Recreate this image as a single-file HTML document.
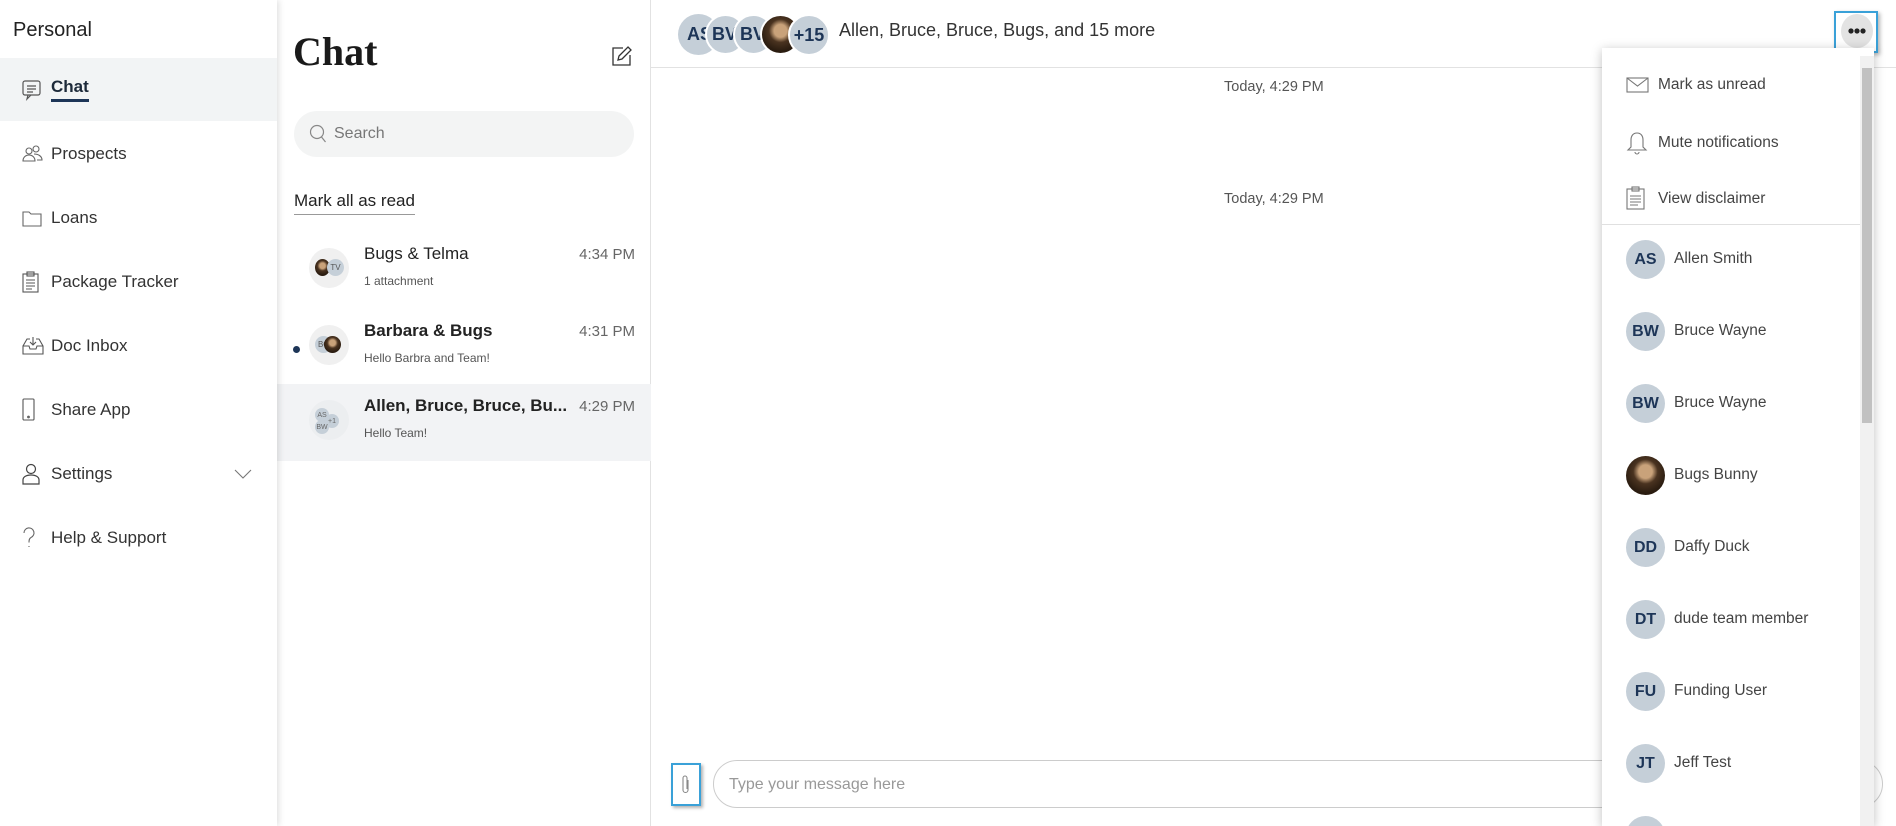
<!DOCTYPE html>
<html style="width:1896px;height:826px;overflow:hidden"><head><meta charset="utf-8"><style>
*{box-sizing:border-box;margin:0;padding:0}
body{width:1896px;height:826px;overflow:hidden;font-family:"Liberation Sans",sans-serif;color:#222;background:#fff;position:relative}
.abs{position:absolute}
#side{left:0;top:0;width:277px;height:826px;background:#fff;box-shadow:2px 0 6px rgba(0,0,0,.12);z-index:2}
.nav{position:absolute;left:0;width:277px;height:64px;display:flex;align-items:center;font-size:17px;color:#333}
.nav svg{position:absolute;left:22px}
.nav span{position:absolute;left:51px}
#list{left:277px;top:0;width:374px;height:826px;background:#fff;border-right:1px solid #e2e2e2}
.row{position:absolute;left:0;width:374px;height:77px}
.av{position:absolute;border-radius:50%;background:#c5cfd8;color:#1d3557;font-weight:bold;display:flex;align-items:center;justify-content:center}
.photo{background:radial-gradient(circle at 50% 40%,#c9a27a 0 22%,#4a3320 40%,#2a1c10 70%)}
.nm{position:absolute;left:87px;top:12px;font-size:17px;color:#222}
.sub{position:absolute;left:87px;top:42px;font-size:12px;color:#555}
.tm{position:absolute;right:16px;top:14px;font-size:15px;color:#666}
#menu{left:1602px;top:48px;width:272px;height:778px;background:#fff;box-shadow:0 2px 10px rgba(0,0,0,.25);z-index:5;overflow:hidden}
.mi{position:absolute;left:0;width:258px;font-size:15.5px;color:#444}
.mi svg{position:absolute;left:24px}
.mi span{position:absolute;left:56px}
.ct{position:absolute;left:0;width:258px;height:60px}
.ct .av{left:24px;top:0;width:39px;height:39px;font-size:16px}
.ct span{position:absolute;left:72px;top:10px;font-size:15.5px;color:#444}
</style></head><body>
<div id="side" class="abs">
  <div class="abs" style="left:13px;top:19px;font-size:20px;color:#222">Personal</div>
  <div class="nav" style="top:58px;height:63px;background:#f2f4f5"><svg width="20" height="22" viewBox="0 0 20 22" fill="none" stroke="#555" stroke-width="1.2"><rect x="1" y="2" width="17" height="14" rx="2"/><path d="M5 7h9M5 10h9M5 13h6M6 16l-1 4 4-4"/></svg><span style="font-weight:bold;color:#1d2a3a;border-bottom:3px solid #1d3557;padding-bottom:2px;top:19px">Chat</span></div>
  <div class="nav" style="top:122px"><svg width="22" height="18" viewBox="0 0 22 18" fill="none" stroke="#666" stroke-width="1.1"><circle cx="7" cy="6" r="3"/><circle cx="14" cy="4" r="3"/><path d="M1 16c0-4 3-6 6-6s6 2 6 6zM12 9c4 0 8 2 8 6h-5"/></svg><span>Prospects</span></div>
  <div class="nav" style="top:186px"><svg width="20" height="18" viewBox="0 0 20 18" fill="none" stroke="#666" stroke-width="1.1"><path d="M1 3h6l2 2h10v12H1z"/></svg><span>Loans</span></div>
  <div class="nav" style="top:250px"><svg width="18" height="22" viewBox="0 0 18 22" fill="none" stroke="#555" stroke-width="1.1"><rect x="1" y="3" width="15" height="18"/><rect x="5" y="1" width="7" height="4"/><path d="M4 9h9M4 12h9M4 15h9M4 18h6"/></svg><span>Package Tracker</span></div>
  <div class="nav" style="top:314px"><svg width="22" height="20" viewBox="0 0 22 20" fill="none" stroke="#555" stroke-width="1.1"><path d="M1 10l4-7h3M14 3h3l4 7v8H1v-8h6l1 3h6l1-3h6M11 1v8M8 6l3 3 3-3"/></svg><span>Doc Inbox</span></div>
  <div class="nav" style="top:378px"><svg width="14" height="24" viewBox="0 0 14 24" fill="none" stroke="#555" stroke-width="1.1"><rect x="1" y="1" width="11" height="21" rx="1"/><circle cx="6.5" cy="19" r="0.8"/></svg><span>Share App</span></div>
  <div class="nav" style="top:442px"><svg width="18" height="22" viewBox="0 0 18 22" fill="none" stroke="#444" stroke-width="1.2"><circle cx="9" cy="6" r="4.5"/><path d="M1 21v-4c0-3 3-5 8-5s8 2 8 5v4z"/></svg><span>Settings</span><svg style="left:234px" width="18" height="10" viewBox="0 0 18 10" fill="none" stroke="#777" stroke-width="1.1"><path d="M1 1l8 8 8-8"/></svg></div>
  <div class="nav" style="top:506px"><svg width="14" height="22" viewBox="0 0 14 22" fill="none" stroke="#666" stroke-width="1.1"><path d="M2 6a5 5 0 1 1 7 4.5c-2 1-2 3-2 5M7 19v1"/></svg><span>Help &amp; Support</span></div>
</div>
<div id="list" class="abs">
  <div class="abs" style="left:16px;top:28px;font-family:'Liberation Serif',serif;font-weight:bold;font-size:40px;color:#1a1a1a">Chat</div>
  <svg class="abs" style="left:335px;top:46px" width="20" height="20" viewBox="0 0 20 20" fill="none" stroke="#333" stroke-width="1.3"><path d="M11 2H1v17h17V9"/><path d="M16 1l3 3-9 9-4 1 1-4z"/></svg>
  <div class="abs" style="left:17px;top:111px;width:340px;height:46px;border-radius:23px;background:#f3f4f4"></div>
  <svg class="abs" style="left:32px;top:124px" width="18" height="20" viewBox="0 0 18 20" fill="none" stroke="#888" stroke-width="1.2"><circle cx="8" cy="8" r="6.5"/><path d="M12.5 13l4 5"/></svg>
  <div class="abs" style="left:57px;top:125px;font-size:16px;color:#777">Search</div>
  <div class="abs" style="left:17px;top:191px;font-size:17px;color:#222;border-bottom:1px solid #999;padding-bottom:3px">Mark all as read</div>
  <div class="row" style="top:232px"><div class="av" style="left:32px;top:16px;width:40px;height:40px;background:#f0f0f0"></div><div class="av photo" style="left:38px;top:27px;width:15px;height:17px"></div><div class="av" style="left:50px;top:27px;width:17px;height:17px;font-size:8px;font-weight:normal;color:#555">TV</div><div class="nm">Bugs &amp; Telma</div><div class="sub">1 attachment</div><div class="tm">4:34 PM</div></div>
  <div class="row" style="top:309px"><div class="abs" style="left:16px;top:37px;width:7px;height:7px;border-radius:50%;background:#1d3557"></div><div class="av" style="left:32px;top:16px;width:40px;height:40px;background:#f0f0f0"></div><div class="av" style="left:38px;top:27px;width:17px;height:17px;font-size:8px;font-weight:normal;color:#555">BC</div><div class="av photo" style="left:47px;top:27px;width:17px;height:17px"></div><div class="nm" style="font-weight:bold">Barbara &amp; Bugs</div><div class="sub">Hello Barbra and Team!</div><div class="tm">4:31 PM</div></div>
  <div class="row" style="top:384px;background:#f2f3f5"><div class="av" style="left:32px;top:16px;width:40px;height:40px;background:#eceef0"></div><div class="av" style="left:38px;top:24px;width:14px;height:14px;font-size:7px;font-weight:normal;color:#666">AS</div><div class="av" style="left:48px;top:30px;width:14px;height:14px;font-size:7px;font-weight:normal;color:#666">+1</div><div class="av" style="left:38px;top:36px;width:14px;height:14px;font-size:7px;font-weight:normal;color:#666">BW</div><div class="nm" style="font-weight:bold">Allen, Bruce, Bruce, Bu...</div><div class="sub">Hello Team!</div><div class="tm">4:29 PM</div></div>
</div>
<div class="abs" style="left:651px;top:0;width:1245px;height:68px;border-bottom:1px solid #e2e2e2;background:#fff"></div>
<div class="av abs" style="left:678px;top:14px;width:41px;height:41px;font-size:18px;justify-content:flex-start;padding-left:9px;overflow:hidden">AS</div>
<div class="av abs" style="left:705px;top:14px;width:41px;height:41px;font-size:18px;border:2px solid #fff;justify-content:flex-start;padding-left:5px;overflow:hidden">BV</div>
<div class="av abs" style="left:733px;top:14px;width:41px;height:41px;font-size:18px;border:2px solid #fff;justify-content:flex-start;padding-left:5px;overflow:hidden">BV</div>
<div class="av abs photo" style="left:760px;top:14px;width:41px;height:41px;border:2px solid #fff"></div>
<div class="av abs" style="left:788px;top:14px;width:42px;height:42px;font-size:18px;border:2px solid #fff">+15</div>
<div class="abs" style="left:839px;top:20px;font-size:18px;color:#333">Allen, Bruce, Bruce, Bugs, and 15 more</div>
<div class="abs" style="left:1224px;top:79px;font-size:14.5px;color:#555">Today, 4:29 PM</div>
<div class="abs" style="left:1224px;top:191px;font-size:14.5px;color:#555">Today, 4:29 PM</div>
<div class="abs" style="left:1834px;top:11px;width:44px;height:42px;border:2px solid #3aa1d8;box-shadow:2px 2px 4px rgba(0,0,0,.3)"></div>
<div class="abs" style="left:1841px;top:14px;width:32px;height:34px;border-radius:50%;background:#e3e3e3"></div>
<div class="abs" style="left:1848px;top:28px;width:18px;height:6px;background:radial-gradient(circle,#222 2.4px,transparent 2.8px) 0 0/6px 6px repeat-x"></div>
<div class="abs" style="left:671px;top:763px;width:30px;height:43px;border:2px solid #3aa1d8;box-shadow:2px 2px 3px rgba(0,0,0,.3)"></div>
<svg class="abs" style="left:681px;top:775px" width="10" height="20" viewBox="0 0 10 20" fill="none" stroke="#888" stroke-width="1.1"><path d="M7 5v10a2.5 2.5 0 0 1-5 0V3a2 2 0 0 1 4 0v11"/></svg>
<div class="abs" style="left:713px;top:760px;width:1170px;height:48px;border:1px solid #ccc;border-radius:24px"></div>
<div class="abs" style="left:729px;top:776px;font-size:16px;color:#999">Type your message here</div>
<div id="menu" class="abs">
  <div class="mi" style="top:29px"><svg width="24" height="16" viewBox="0 0 24 16" fill="none" stroke="#777" stroke-width="1.1"><rect x="1" y="1" width="21" height="14"/><path d="M1 1l10.5 8L22 1"/></svg><span style="top:-1px">Mark as unread</span></div>
  <div class="mi" style="top:83px"><svg width="22" height="24" viewBox="0 0 22 24" fill="none" stroke="#777" stroke-width="1.1"><path d="M11 2c-4 0-6 3-6 7v7l-3 3h18l-3-3V9c0-4-2-7-6-7zM9 21a2 2 0 0 0 4 0"/></svg><span style="top:3px">Mute notifications</span></div>
  <div class="mi" style="top:138px"><svg width="20" height="24" viewBox="0 0 20 24" fill="none" stroke="#777" stroke-width="1.1"><rect x="1" y="3" width="17" height="20"/><rect x="6" y="1" width="7" height="4"/><path d="M4 10h11M4 13h11M4 16h11M4 19h8"/></svg><span style="top:4px">View disclaimer</span></div>
  <div class="abs" style="left:0;top:176px;width:258px;border-top:1px solid #e0e0e0"></div>
  <div class="ct" style="top:192px"><div class="av">AS</div><span>Allen Smith</span></div>
  <div class="ct" style="top:264px"><div class="av">BW</div><span>Bruce Wayne</span></div>
  <div class="ct" style="top:336px"><div class="av">BW</div><span>Bruce Wayne</span></div>
  <div class="ct" style="top:408px"><div class="av photo"></div><span>Bugs Bunny</span></div>
  <div class="ct" style="top:480px"><div class="av">DD</div><span>Daffy Duck</span></div>
  <div class="ct" style="top:552px"><div class="av">DT</div><span>dude team member</span></div>
  <div class="ct" style="top:624px"><div class="av">FU</div><span>Funding User</span></div>
  <div class="ct" style="top:696px"><div class="av">JT</div><span>Jeff Test</span></div>
  <div class="ct" style="top:768px;height:10px;overflow:hidden"><div class="av"></div></div>
  <div class="abs" style="left:258px;top:8px;width:14px;height:770px;background:#f1f1f1"></div>
  <div class="abs" style="left:260px;top:20px;width:10px;height:355px;background:#c1c1c1"></div>
</div>
</body></html>
